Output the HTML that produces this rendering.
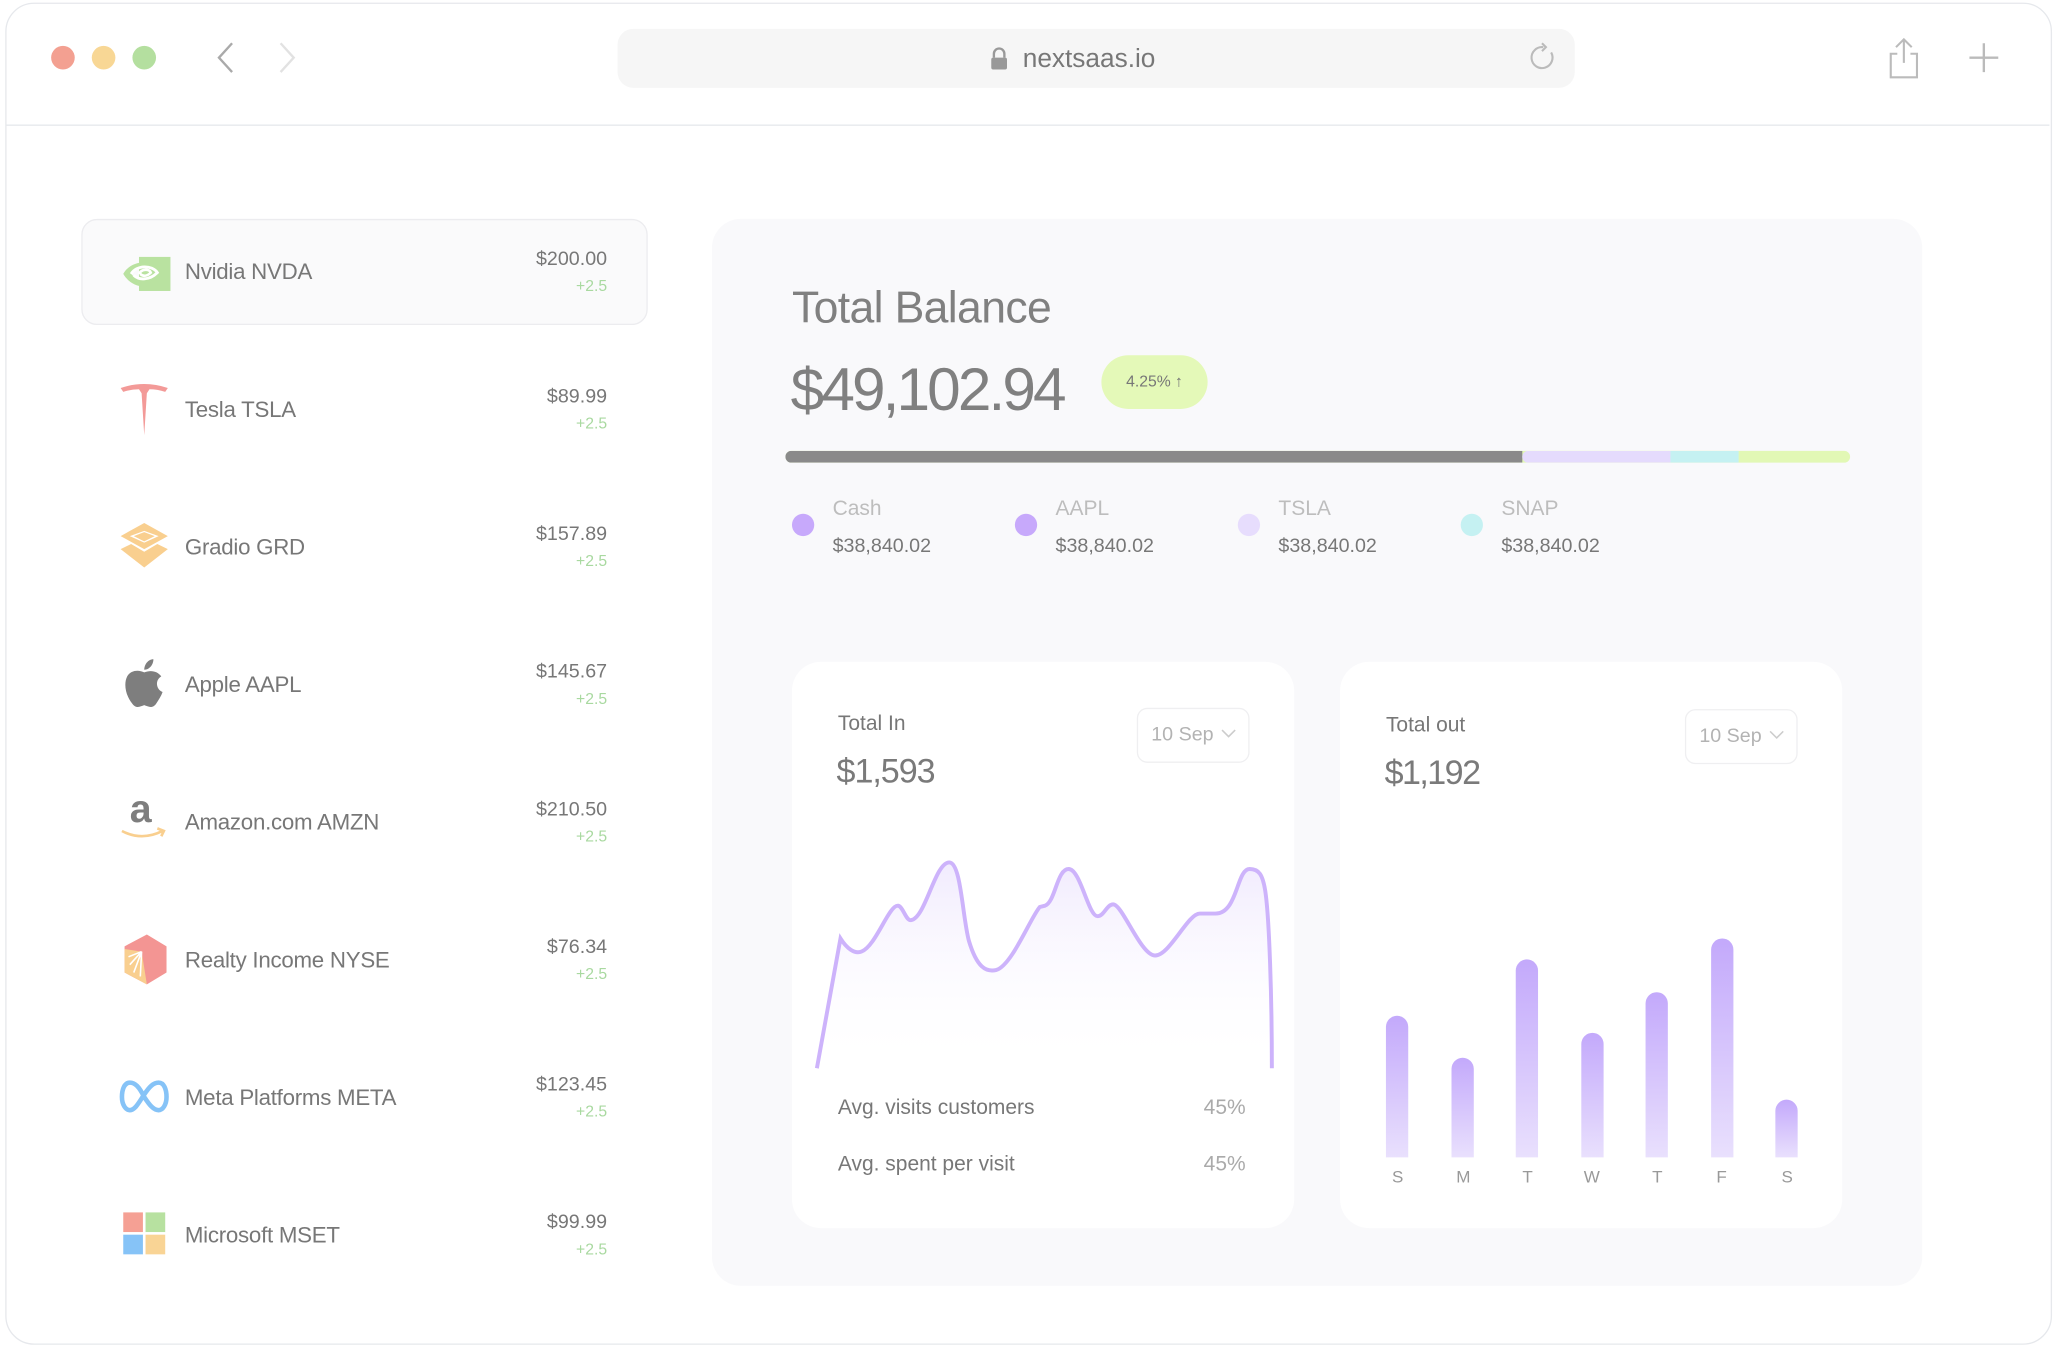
<!DOCTYPE html>
<html><head><meta charset="utf-8"><style>
html,body{margin:0;padding:0;background:#fff;width:2056px;height:1350px;overflow:hidden}
#s{position:absolute;left:0;top:0;width:1568px;height:1030px;transform:scale(1.3112,1.3107);transform-origin:0 0;font-family:"Liberation Sans",sans-serif;color:#7a7a7a}
.a{position:absolute;white-space:nowrap}
.c{line-height:1}
.nm{font-size:17px;color:#777;left:141px;letter-spacing:-0.2px}
.pr{font-size:15px;color:#777;right:1105px;text-align:right}
.ch{font-size:12px;color:#a9d9a0;right:1105px;text-align:right}
.ic{position:absolute;left:90px;width:40px;height:40px}
.dot{position:absolute;width:17px;height:17px;border-radius:50%}
.lg{font-size:16px;color:#bdbdbd}
.lv{font-size:15px;color:#777}
.bar{position:absolute;width:17px;border-radius:9px 9px 0 0;background:linear-gradient(#c3a9fb,#e9e0fd)}
.dl{font-size:13px;color:#999;width:20px;text-align:center}
</style></head><body><div id="s">
<div class="a" style="left:4px;top:2px;width:1559px;height:1022px;border:1px solid #e6e8ec;border-radius:22px"></div>
<div class="a" style="left:5px;top:95px;width:1558px;height:1px;background:#e6e8ec"></div>
<div class="dot" style="left:39px;top:35px;width:18px;height:18px;background:#f3a091"></div>
<div class="dot" style="left:70px;top:35px;width:18px;height:18px;background:#f8d795"></div>
<div class="dot" style="left:101px;top:35px;width:18px;height:18px;background:#b4df9f"></div>
<svg class="a" style="left:160px;top:30px" width="70" height="30"><path d="M17 3 L7 14 L17 25" fill="none" stroke="#aaa" stroke-width="1.8"/><path d="M54 3 L64 14 L54 25" fill="none" stroke="#e2e2e2" stroke-width="1.8"/></svg>
<div class="a" style="left:471px;top:22px;width:730px;height:45px;background:#f6f6f6;border-radius:12px"></div>
<svg class="a" style="left:754px;top:35px" width="16" height="20"><path d="M4 9 V6 a4 4 0 0 1 8 0 V9" fill="none" stroke="#999" stroke-width="1.8"/><rect x="2" y="9" width="12" height="9" rx="1.5" fill="#999"/></svg>
<div class="a c" style="left:780px;top:35px;font-size:20px;color:#777">nextsaas.io</div>
<svg class="a" style="left:1166px;top:32px" width="22" height="24"><path d="M17 8 A8 8 0 1 1 11 4" fill="none" stroke="#bbb" stroke-width="1.6"/><path d="M10 1 L13 4 L10 7" fill="none" stroke="#bbb" stroke-width="1.6"/></svg>
<svg class="a" style="left:1438px;top:28px" width="30" height="34"><path d="M14 2 V20 M8 8 L14 2 L20 8 M9 13 H4 V31 H24 V13 H19" fill="none" stroke="#bbb" stroke-width="1.6"/></svg>
<svg class="a" style="left:1500px;top:31px" width="26" height="26"><path d="M13 2 V24 M2 13 H24" stroke="#bbb" stroke-width="1.8"/></svg>

<div class="a" style="left:62px;top:167px;width:430px;height:79px;background:#fafafb;border:1px solid #ececef;border-radius:12px"></div>
<svg class="ic" style="top:190px" viewBox="0 0 40 40"><rect x="16" y="6" width="24" height="26" fill="#b9e2a0"/><path d="M4 19 C10 8 26 8 32 15 C24 13 14 13 10 19 C14 24 22 25 26 23 L24 28 C16 30 8 26 4 19Z" fill="#b9e2a0"/><path d="M10 19 C14 12 26 12 30 18 C24 24 16 24 12 20" fill="none" stroke="#fff" stroke-width="2.2"/><path d="M16 19 C18 15 24 15 25 18 C22 21 19 21 17 19" fill="none" stroke="#fff" stroke-width="2"/></svg>
<div class="a c nm" style="top:199px">Nvidia NVDA</div>
<div class="a c pr" style="top:190px;right:1105px">$200.00</div>
<div class="a c ch" style="top:212px">+2.5</div>

<svg class="ic" style="top:292px" viewBox="0 0 40 40"><path d="M2 4 Q20 -2 38 4 L36 7 Q30 5 24 5 L22 8 L20 40 L18 8 L16 5 Q10 5 4 7Z" fill="#f39a98"/></svg>
<div class="a c nm" style="top:304px">Tesla TSLA</div>
<div class="a c pr" style="top:295px">$89.99</div>
<div class="a c ch" style="top:317px">+2.5</div>

<svg class="ic" style="top:397px" viewBox="0 0 40 40"><path d="M20 2 L38 12 L20 22 L2 12Z M20 8 L9 12 L20 17 L31 12Z" fill="#f9cf8f" fill-rule="evenodd"/><path d="M2 22 L10 18 L20 24 L30 18 L38 22 L20 36Z M10 23 L20 29 L30 23 L30 24 L20 30Z" fill="#f9cf8f"/><path d="M20 9 L28 12 L20 16 L12 12Z" fill="#f9cf8f"/></svg>
<div class="a c nm" style="top:409px">Gradio GRD</div>
<div class="a c pr" style="top:400px">$157.89</div>
<div class="a c ch" style="top:422px">+2.5</div>

<svg class="ic" style="top:501px" viewBox="0 0 40 40"><path d="M20 12 C16 10 10 10 7 15 C4 21 6 30 11 36 C14 40 17 38 20 37 C23 38 26 40 29 36 C31 33 33 30 34 27 C29 25 28 18 33 15 C30 11 25 10 20 12Z" fill="#7e7e7e"/><path d="M20 10 C20 6 23 2 27 2 C27 6 24 10 20 10Z" fill="#7e7e7e"/></svg>
<div class="a c nm" style="top:514px">Apple AAPL</div>
<div class="a c pr" style="top:505px">$145.67</div>
<div class="a c ch" style="top:527px">+2.5</div>

<div class="a" style="left:99px;top:603px;font-size:30px;font-weight:bold;color:#7e7e7e;line-height:1">a</div>
<svg class="ic" style="top:608px" viewBox="0 0 40 40"><path d="M3 26 Q18 34 34 26 M30 24 L35 26 L33 30" fill="none" stroke="#f9cf8f" stroke-width="2"/></svg>
<div class="a c nm" style="top:619px">Amazon.com AMZN</div>
<div class="a c pr" style="top:610px">$210.50</div>
<div class="a c ch" style="top:632px">+2.5</div>

<svg class="ic" style="top:712px" viewBox="0 0 40 40"><path d="M22 1 L37 10 V30 L22 39 L5 30 L5 10Z" fill="#f39593"/><path d="M5 12 L18 14 L22 39 L5 30Z" fill="#f9cf8f"/><path d="M18 14 L8 18 M18 14 L9 24 M18 14 L12 30 M18 14 L17 33" stroke="#fff" stroke-width="1.2"/></svg>
<div class="a c nm" style="top:724px">Realty Income NYSE</div>
<div class="a c pr" style="top:715px">$76.34</div>
<div class="a c ch" style="top:737px">+2.5</div>

<svg class="ic" style="top:817px" viewBox="0 0 40 40"><path d="M20 20 C16 12 13 9 9 9 C5 9 3 14 3 20 C3 26 6 30 9 30 C13 30 16 24 20 18 C24 12 27 9 31 9 C35 9 37 14 37 20 C37 26 34 30 31 30 C27 30 24 26 20 20Z" fill="none" stroke="#86c3f7" stroke-width="3.5"/></svg>
<div class="a c nm" style="top:829px">Meta Platforms META</div>
<div class="a c pr" style="top:820px">$123.45</div>
<div class="a c ch" style="top:842px">+2.5</div>

<svg class="ic" style="top:922px" viewBox="0 0 40 40"><rect x="4" y="3" width="15" height="15" fill="#f5a094"/><rect x="21" y="3" width="15" height="15" fill="#b7e1a0"/><rect x="4" y="20" width="15" height="15" fill="#86c3f7"/><rect x="21" y="20" width="15" height="15" fill="#f9d495"/></svg>
<div class="a c nm" style="top:934px">Microsoft MSET</div>
<div class="a c pr" style="top:925px">$99.99</div>
<div class="a c ch" style="top:947px">+2.5</div>

<div class="a" style="left:543px;top:167px;width:923px;height:814px;background:#f9f9fb;border-radius:22px"></div>
<div class="a c" style="left:604px;top:218px;font-size:34px;color:#808080;letter-spacing:-0.5px">Total Balance</div>
<div class="a c" style="left:603px;top:274px;font-size:46px;color:#808080;letter-spacing:-2.2px">$49,102.94</div>
<div class="a" style="left:840px;top:271px;width:81px;height:41px;border-radius:21px;background:#e4f9b8;font-size:12px;color:#777;text-align:center;line-height:41px">4.25% ↑</div>
<div class="a" style="left:599px;top:344px;width:812px;height:9px;border-radius:5px;overflow:hidden;background:#e2f8b5">
<div class="a" style="left:0;top:0;width:562px;height:9px;background:#8a8a8a"></div>
<div class="a" style="left:562px;top:0;width:113px;height:9px;background:#e5dbfd;border-radius:5px 0 0 5px"></div>
<div class="a" style="left:675px;top:0;width:52px;height:9px;background:#c5f1f2"></div></div>
<div class="dot" style="left:604px;top:392px;background:#c7a9fb"></div>
<div class="dot" style="left:774px;top:392px;background:#c7a9fb"></div>
<div class="dot" style="left:944px;top:392px;background:#e7ddfd"></div>
<div class="dot" style="left:1114px;top:392px;background:#c5f1f2"></div>
<div class="a c lg" style="left:635px;top:381px">Cash</div><div class="a c lv" style="left:635px;top:409px">$38,840.02</div>
<div class="a c lg" style="left:805px;top:381px">AAPL</div><div class="a c lv" style="left:805px;top:409px">$38,840.02</div>
<div class="a c lg" style="left:975px;top:381px">TSLA</div><div class="a c lv" style="left:975px;top:409px">$38,840.02</div>
<div class="a c lg" style="left:1145px;top:381px">SNAP</div><div class="a c lv" style="left:1145px;top:409px">$38,840.02</div>

<div class="a" style="left:604px;top:505px;width:383px;height:432px;background:#fff;border-radius:22px"></div>
<div class="a" style="left:1022px;top:505px;width:383px;height:432px;background:#fff;border-radius:22px"></div>
<div class="a c" style="left:639px;top:545px;font-size:16px;color:#777">Total In</div>
<div class="a c" style="left:638px;top:575px;font-size:26px;color:#7a7a7a;letter-spacing:-0.8px">$1,593</div>
<div class="a" style="left:867px;top:540px;width:84px;height:40px;border:1px solid #efeff1;border-radius:8px"></div>
<div class="a c" style="left:878px;top:553px;font-size:15px;color:#b3b3b3">10 Sep</div>
<svg class="a" style="left:931px;top:556px" width="12" height="8"><path d="M1 1 L6 6 L11 1" fill="none" stroke="#ccc" stroke-width="1.2"/></svg>
<div class="a c" style="left:1057px;top:546px;font-size:16px;color:#777">Total out</div>
<div class="a c" style="left:1056px;top:576px;font-size:26px;color:#7a7a7a;letter-spacing:-1.2px">$1,192</div>
<div class="a" style="left:1285px;top:541px;width:84px;height:40px;border:1px solid #efeff1;border-radius:8px"></div>
<div class="a c" style="left:1296px;top:554px;font-size:15px;color:#b3b3b3">10 Sep</div>
<svg class="a" style="left:1349px;top:557px" width="12" height="8"><path d="M1 1 L6 6 L11 1" fill="none" stroke="#ccc" stroke-width="1.2"/></svg>

<svg class="a" style="left:0;top:0" width="1568" height="1030">
<defs><linearGradient id="g" x1="0" y1="0" x2="0" y2="1"><stop offset="0" stop-color="#f1ebfe"/><stop offset="1" stop-color="#fff" stop-opacity="0"/></linearGradient></defs>
<path d="M623 815 L641 716 C646 724 652 728 657 726 C668 722 678 690 685 691 C689 692 691 703 695 702 C706 700 713 658 724 658 C733 658 734 700 739 718 C745 738 752 742 760 740 C772 736 786 700 793 692 L797 691 C805 688 806 663 815 663 C824 663 830 699 837 699 C842 699 844 690 849 690 C856 690 870 729 881 729 C892 729 906 697 915 697 L927 697 C944 697 943 663 953 663 C960 663 963 667 965 680 C968 700 970 760 970 815 Z" fill="url(#g)"/>
<path d="M623 815 L641 716 C646 724 652 728 657 726 C668 722 678 690 685 691 C689 692 691 703 695 702 C706 700 713 658 724 658 C733 658 734 700 739 718 C745 738 752 742 760 740 C772 736 786 700 793 692 L797 691 C805 688 806 663 815 663 C824 663 830 699 837 699 C842 699 844 690 849 690 C856 690 870 729 881 729 C892 729 906 697 915 697 L927 697 C944 697 943 663 953 663 C960 663 963 667 965 680 C968 700 970 760 970 815" fill="none" stroke="#cdb3fb" stroke-width="3"/>
</svg>
<div class="a c" style="left:639px;top:838px;font-size:16px;color:#777">Avg. visits customers</div>
<div class="a c" style="left:918px;top:838px;font-size:16px;color:#aaa">45%</div>
<div class="a c" style="left:639px;top:881px;font-size:16px;color:#777">Avg. spent per visit</div>
<div class="a c" style="left:918px;top:881px;font-size:16px;color:#aaa">45%</div>

<div class="bar" style="left:1057px;top:775px;height:108px"></div>
<div class="bar" style="left:1107px;top:807px;height:76px"></div>
<div class="bar" style="left:1156px;top:732px;height:151px"></div>
<div class="bar" style="left:1206px;top:788px;height:95px"></div>
<div class="bar" style="left:1255px;top:757px;height:126px"></div>
<div class="bar" style="left:1305px;top:716px;height:167px"></div>
<div class="bar" style="left:1354px;top:839px;height:44px"></div>
<div class="a c dl" style="left:1056px;top:891px">S</div>
<div class="a c dl" style="left:1106px;top:891px">M</div>
<div class="a c dl" style="left:1155px;top:891px">T</div>
<div class="a c dl" style="left:1204px;top:891px">W</div>
<div class="a c dl" style="left:1254px;top:891px">T</div>
<div class="a c dl" style="left:1303px;top:891px">F</div>
<div class="a c dl" style="left:1353px;top:891px">S</div>
</div></body></html>
